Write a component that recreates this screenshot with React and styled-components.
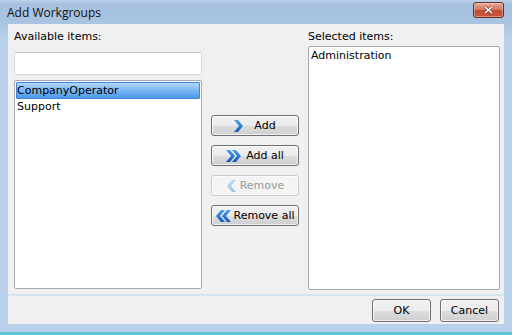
import React from "react";
import styled, { createGlobalStyle } from "styled-components";

const Global = createGlobalStyle`
  html, body { margin: 0; padding: 0; }
  body { background: #b9d1ea; font-family: "DejaVu Sans", Verdana, sans-serif; font-size: 11px; color: #000; }
`;

const Window = styled.div`
  width: 512px;
  height: 335px;
  display: flex;
  flex-direction: column;
  background: linear-gradient(to bottom, #bcd2ea 0px, #a6c1de 4px, #a9c4e0 22px, #b9d1ea 40px, #b9d1ea 100%);
  box-sizing: border-box;
  border-bottom: 3px solid #62c6d6;
`;

const TitleBar = styled.div`
  height: 24px;
  display: flex;
  align-items: center;
  justify-content: space-between;
  padding: 0 8px 0 7px;
  font-family: "Open Sans", "DejaVu Sans", sans-serif;
  font-size: 12px;
  color: #111;
`;

const CloseButton = styled.div`
  width: 29px;
  height: 14px;
  margin-top: -5px;
  border: 1px solid #6a2a22;
  border-radius: 3px;
  background: linear-gradient(to bottom, #e8a796 0%, #d57a66 45%, #c24a32 55%, #c65a40 100%);
  display: flex;
  align-items: center;
  justify-content: center;
  box-shadow: inset 0 0 0 1px rgba(255,255,255,0.35);
`;

const Client = styled.div`
  flex: 1;
  margin: 0 8px 8px 8px;
  background: #f0f0f0;
  display: flex;
  flex-direction: column;
`;

const Content = styled.div`
  height: 270px;
  display: flex;
  padding: 0 4px 0 6px;
  box-sizing: border-box;
`;

const Column = styled.div`
  display: flex;
  flex-direction: column;
  width: ${(p) => p.$width}px;
`;

const Label = styled.div`
  height: ${(p) => p.$height}px;
  line-height: 14px;
  padding-top: 6px;
  box-sizing: border-box;
`;

const TextInput = styled.div`
  height: 23px;
  border: 1px solid #d5d8de;
  border-top-color: #c3c7cf;
  border-radius: 2px;
  background: #fff;
  box-sizing: border-box;
  margin-bottom: 5px;
`;

const ListBox = styled.div`
  height: ${(p) => p.$height}px;
  border: 1px solid #a4a8b0;
  border-radius: 2px;
  background: #fff;
  box-sizing: border-box;
  padding: 1px;
`;

const ListItem = styled.div`
  height: ${(p) => (p.$selected ? 17 : 16)}px;
  line-height: ${(p) => (p.$selected ? 15 : 16)}px;
  padding-left: ${(p) => (p.$selected ? 0 : 1)}px;
  box-sizing: border-box;
  border: ${(p) => (p.$selected ? "1px solid #3d86da" : "none")};
  border-radius: 1px;
  background: ${(p) =>
    p.$selected ? "linear-gradient(to bottom, #b2d6fb 0%, #7ab6f4 50%, #4d97ea 100%)" : "transparent"};
`;

const Middle = styled.div`
  flex: 1;
  display: flex;
  flex-direction: column;
  align-items: center;
  gap: 9px;
  padding-top: 91px;
`;

const Button = styled.button`
  width: ${(p) => p.$width}px;
  height: ${(p) => p.$height}px;
  margin: 0;
  padding: 0;
  display: flex;
  align-items: center;
  justify-content: center;
  gap: ${(p) => p.$gap || 0}px;
  border: 1px solid ${(p) => (p.disabled ? "#c9cbcd" : "#707070")};
  border-radius: 3px;
  background: ${(p) =>
    p.disabled
      ? "#f4f4f4"
      : "linear-gradient(to bottom, #f2f2f2 0%, #ebebeb 50%, #dddddd 51%, #cfcfcf 100%)"};
  box-shadow: inset 0 0 0 1px rgba(255,255,255,0.7);
  font-family: "DejaVu Sans", Verdana, sans-serif;
  font-size: 11px;
  color: ${(p) => (p.disabled ? "#9a9a9a" : "#000")};
  box-sizing: border-box;
`;

const Separator = styled.div`
  height: 2px;
  background: #d3e5ee;
`;

const Footer = styled.div`
  flex: 1;
  display: flex;
  justify-content: flex-end;
  align-items: flex-start;
  gap: 9px;
  padding: 3px 5px 0 0;
`;

const Chevron = ({ double, left, disabled }) => {
  const id = `g${double ? "d" : "s"}${left ? "l" : "r"}${disabled ? "x" : ""}`;
  const light = disabled ? "#bcd8f4" : "#4aa3f0";
  const dark = disabled ? "#9cc4ea" : "#1456c0";
  const single = "0,0 4,0 9,6 4,12 0,12 5,6";
  const w = double ? 15 : 10;
  return (
    <svg width={w} height="12" viewBox={`0 0 ${w} 12`}>
      <defs>
        <linearGradient id={id} x1="0" y1="0" x2="0" y2="1">
          <stop offset="0" stopColor={light} />
          <stop offset="1" stopColor={dark} />
        </linearGradient>
      </defs>
      <g transform={left ? `translate(${w} 0) scale(-1 1)` : undefined}>
        <polygon points={single} fill={`url(#${id})`} />
        {double && <polygon points={single} transform="translate(6 0)" fill={`url(#${id})`} />}
      </g>
    </svg>
  );
};

export default function App() {
  return (
    <>
      <Global />
      <Window>
        <TitleBar>
          <span>Add Workgroups</span>
          <CloseButton>
            <svg width="9" height="8" viewBox="0 0 9 8">
              <path d="M1 1 L8 7 M8 1 L1 7" stroke="#7a3a30" strokeWidth="2.6" />
              <path d="M1 1 L8 7 M8 1 L1 7" stroke="#fff" strokeWidth="1.6" />
            </svg>
          </CloseButton>
        </TitleBar>
        <Client>
          <Content>
            <Column $width={188}>
              <Label $height={28}>Available items:</Label>
              <TextInput />
              <ListBox $height={209}>
                <ListItem $selected>CompanyOperator</ListItem>
                <ListItem>Support</ListItem>
              </ListBox>
            </Column>
            <Middle>
              <Button $width={88} $height={21} $gap={10}>
                <Chevron />
                <span>Add</span>
              </Button>
              <Button $width={88} $height={21} $gap={5}>
                <Chevron double />
                <span>Add all</span>
              </Button>
              <Button $width={88} $height={21} $gap={4} disabled>
                <Chevron left disabled />
                <span>Remove</span>
              </Button>
              <Button $width={88} $height={21} $gap={3}>
                <Chevron double left />
                <span>Remove all</span>
              </Button>
            </Middle>
            <Column $width={192}>
              <Label $height={22}>Selected items:</Label>
              <ListBox $height={244}>
                <ListItem>Administration</ListItem>
              </ListBox>
            </Column>
          </Content>
          <Separator />
          <Footer>
            <Button $width={59} $height={23}>OK</Button>
            <Button $width={59} $height={23}>Cancel</Button>
          </Footer>
        </Client>
      </Window>
    </>
  );
}
